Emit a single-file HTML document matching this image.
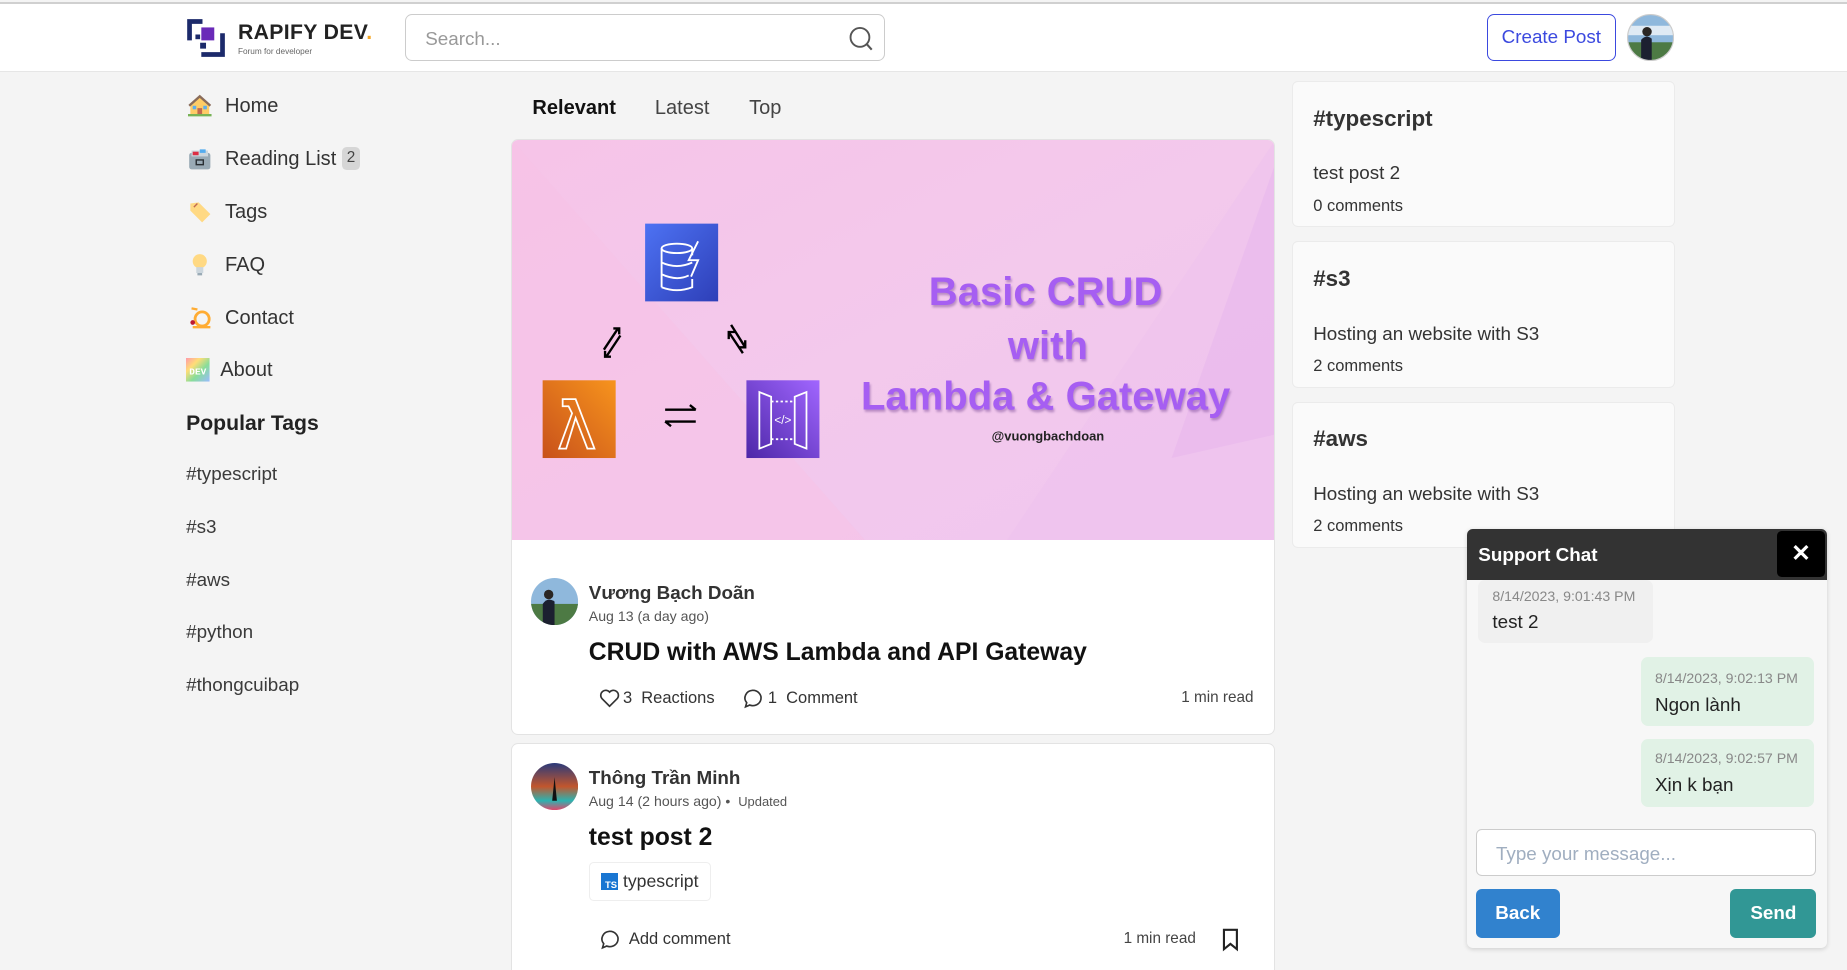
<!DOCTYPE html>
<html><head><meta charset="utf-8">
<style>
*{box-sizing:border-box;margin:0;padding:0}
html,body{width:1847px;height:970px;overflow:hidden;background:#f4f4f4}
#w{position:relative;width:1568px;height:824px;zoom:1.17793;background:#f4f4f4;font-family:"Liberation Sans","Noto Sans CJK SC",sans-serif;color:#222;overflow:hidden}
.a{position:absolute;white-space:nowrap}
.nav{font-size:17px;color:#333;line-height:20px}
.tag{font-size:16px;color:#3a3a3a;line-height:20px;left:158px}
.card{position:absolute;background:#fff;border:1px solid #e3e3e3;border-radius:6px;overflow:hidden}
.rc{position:absolute;left:1097px;width:325px;height:124px;background:#fafafa;border:1px solid #ebebeb;border-radius:5px}
.rc h3{position:absolute;left:17px;top:20px;font-size:19px;color:#333}
.rc p{position:absolute;left:17px;top:68px;font-size:16px;color:#333}
.rc span{position:absolute;left:17px;top:97px;font-size:14px;color:#333}
.msg{position:absolute;border-radius:6px;padding:0 12px}
.msg .t{font-size:12px;color:#888;position:absolute;left:12px}
.msg .b{font-size:16px;color:#222;position:absolute;left:12px}
</style></head><body><div id="w">
<!-- header -->
<div class="a" style="left:0;width:1568px;border-top:2px solid #d0d0d0;border-bottom:1px solid #e6e6e6;top:2px;height:59px;background:#fff"></div>
<svg class="a" style="left:158px;top:15px" width="34" height="34" viewBox="0 0 34 34">
<path d="M1 1H14V5H5V19H1Z" fill="#1c2a6b"/><path d="M33 13V33H13V29H29V13Z" fill="#1c2a6b"/>
<rect x="13" y="8" width="11" height="11" fill="#6a2ab8"/><rect x="8" y="14" width="4" height="4" fill="#1c2a6b"/><rect x="12" y="21" width="5" height="5" fill="#1c2a6b"/></svg>
<div class="a" style="left:202px;top:18px;font-size:18px;font-weight:bold;color:#222;letter-spacing:0.3px">RAPIFY DEV<span style="color:#f5a623">.</span></div>
<div class="a" style="left:202px;top:40px;font-size:7px;color:#666">Forum for developer</div>
<div class="a" style="left:344px;top:12px;width:407px;height:40px;border:1px solid #ccc;border-radius:6px;background:#fff"></div>
<div class="a" style="left:361px;top:24px;font-size:16px;color:#999">Search...</div>
<svg class="a" style="left:719px;top:21px" width="24" height="24" viewBox="0 0 24 24"><circle cx="11" cy="10.5" r="8" fill="none" stroke="#555" stroke-width="1.6"/><path d="M17 16.5L21 21" stroke="#555" stroke-width="1.8"/></svg>
<div class="a" style="left:1262px;top:12px;width:110px;height:40px;border:1px solid #3b49df;border-radius:6px;background:#fff;color:#3b49df;font-size:16px;text-align:center;line-height:38px">Create Post</div>
<svg class="a" style="left:1381px;top:12px" width="40" height="40" viewBox="0 0 40 40"><defs><clipPath id="c1"><circle cx="20" cy="20" r="19.5"/></clipPath></defs><g clip-path="url(#c1)"><rect width="40" height="40" fill="#8fb8dc"/><rect y="10" width="40" height="8" fill="#dfeaf4"/><rect y="24" width="40" height="16" fill="#4d7a44"/><path d="M12 40V22Q16 17 21 21V40Z" fill="#1c2030"/><circle cx="17" cy="15" r="4" fill="#2a2624"/></g><circle cx="20" cy="20" r="19.5" fill="none" stroke="#ccc"/></svg>

<!-- left nav -->
<svg class="a" style="left:160px;top:80px" width="20" height="20" viewBox="0 0 20 20"><path d="M2 9L10 2L18 9V17H2Z" fill="#ffcc66"/><path d="M1 10L10 2L19 10" fill="none" stroke="#8a6c5a" stroke-width="2"/><rect x="8" y="12" width="4" height="6" fill="#c1694f"/><rect x="4" y="10" width="3" height="3" fill="#5dadec"/><rect x="13" y="10" width="3" height="3" fill="#5dadec"/><rect x="0" y="17" width="20" height="2" fill="#77b255"/></svg>
<div class="a nav" style="left:191px;top:81px">Home</div>
<svg class="a" style="left:160px;top:125px" width="20" height="20" viewBox="0 0 20 20"><rect x="1" y="5" width="18" height="14" rx="2" fill="#99aab5"/><rect x="3" y="3" width="14" height="5" fill="#ccd6dd"/><rect x="4" y="4" width="5" height="3" fill="#dd2e44"/><rect x="10" y="2" width="5" height="3" fill="#55acee"/><rect x="7" y="11" width="6" height="4" fill="none" stroke="#292f33" stroke-width="1.2"/></svg>
<div class="a nav" style="left:191px;top:126px">Reading List</div>
<div class="a" style="left:290px;top:125px;width:16px;height:19px;background:#d6d6d6;border-radius:4px;font-size:13px;color:#444;text-align:center;line-height:19px">2</div>
<svg class="a" style="left:160px;top:170px" width="20" height="20" viewBox="0 0 20 20"><path d="M2 3L9 2L19 12L12 19L2 9Z" fill="#ffd983"/><path d="M5 6L8 3" stroke="#c1694f" stroke-width="1.2"/></svg>
<div class="a nav" style="left:191px;top:171px">Tags</div>
<svg class="a" style="left:160px;top:215px" width="20" height="20" viewBox="0 0 20 20"><circle cx="10" cy="7" r="6" fill="#ffd983"/><rect x="7" y="12" width="6" height="5" fill="#ccd6dd"/><rect x="8" y="17" width="4" height="2" fill="#99aab5"/></svg>
<div class="a nav" style="left:191px;top:216px">FAQ</div>
<svg class="a" style="left:160px;top:260px" width="20" height="20" viewBox="0 0 20 20"><circle cx="12" cy="11" r="6" fill="none" stroke="#ffac33" stroke-width="2.4"/><path d="M3 2L8 3" stroke="#ffac33" stroke-width="2"/><path d="M4 18L19 18" stroke="#ffac33" stroke-width="2"/><circle cx="4" cy="14" r="2" fill="#be1931"/></svg>
<div class="a nav" style="left:191px;top:261px">Contact</div>
<svg class="a" style="left:158px;top:304px" width="20" height="20" viewBox="0 0 20 20"><defs><linearGradient id="rb" x1="0" y1="0" x2="1" y2="1"><stop offset="0" stop-color="#f9a"/><stop offset=".3" stop-color="#fd7"/><stop offset=".6" stop-color="#8d9"/><stop offset="1" stop-color="#9bf"/></linearGradient></defs><rect width="20" height="20" fill="url(#rb)"/><text x="10" y="14" font-size="8" fill="#fff" text-anchor="middle" font-family="Liberation Mono" font-weight="bold">DEV</text></svg>
<div class="a nav" style="left:187px;top:305px">About</div>
<div class="a" style="left:158px;top:350px;font-size:18px;font-weight:bold;color:#222">Popular Tags</div>
<div class="a tag" style="top:392px">#typescript</div>
<div class="a tag" style="top:437px">#s3</div>
<div class="a tag" style="top:482px">#aws</div>
<div class="a tag" style="top:526px">#python</div>
<div class="a tag" style="top:571px">#thongcuibap</div>

<!-- tabs -->
<div class="a" style="left:452px;top:82px;font-size:17px;font-weight:bold;color:#111">Relevant</div>
<div class="a" style="left:556px;top:82px;font-size:17px;color:#444">Latest</div>
<div class="a" style="left:636px;top:82px;font-size:17px;color:#444">Top</div>

<!-- card 1 -->
<div class="card" style="left:434px;top:118px;width:648px;height:506px">
<svg style="position:absolute;left:0;top:0" width="648" height="340" viewBox="0 0 648 340">
<defs><linearGradient id="bg" x1="0" y1="0" x2="1" y2="1"><stop offset="0" stop-color="#f6c4e8"/><stop offset=".5" stop-color="#f3c9ec"/><stop offset="1" stop-color="#f0c6ef"/></linearGradient>
<linearGradient id="db" x1="0" y1="0" x2="1" y2="1"><stop offset="0" stop-color="#4d72f3"/><stop offset="1" stop-color="#2e3fb8"/></linearGradient>
<linearGradient id="lm" x1="0" y1="1" x2="1" y2="0"><stop offset="0" stop-color="#c8511b"/><stop offset="1" stop-color="#f7941d"/></linearGradient>
<linearGradient id="ag" x1="0" y1="1" x2="1" y2="0"><stop offset="0" stop-color="#4d27a8"/><stop offset="1" stop-color="#a166ff"/></linearGradient></defs>
<rect width="648" height="340" fill="url(#bg)"/>
<path d="M0 0L300 340H0Z" fill="#f8c2e6" opacity=".5"/>
<path d="M648 0V340H420Z" fill="#eec2ee" opacity=".5"/>
<path d="M648 20L560 270L648 250Z" fill="#e8b8ec" opacity=".6"/>
<rect x="113" y="71" width="62" height="66" fill="url(#db)"/>
<g fill="none" stroke="#fff" stroke-width="1.6"><ellipse cx="140" cy="92" rx="13" ry="4"/><path d="M127 92V125M153 92V98M127 104Q140 110 153 104M127 114Q140 120 150 115M127 125Q140 130 153 125V118"/><path d="M158 86L150 102H158L152 116"/></g>
<rect x="26" y="204" width="62" height="66" fill="url(#lm)"/>
<path d="M43 220H54L70 262H64L54 236L46 262H40L51 232L48 226H43Z" fill="none" stroke="#fff" stroke-width="1.5"/>
<rect x="199" y="204" width="62" height="66" fill="url(#ag)"/>
<g fill="none" stroke="#fff" stroke-width="1.5"><path d="M210 214L220 218V258L210 262ZM250 214L240 218V258L250 262Z"/><path d="M220 222H240M220 254H240" stroke-dasharray="2 2"/><text x="230" y="241" fill="#fff" stroke="none" font-size="10" text-anchor="middle" font-family="Liberation Sans">&lt;/&gt;</text></g>
<g stroke="#000" stroke-width="2" fill="none"><path d="M78 178L90 160M86 160H91V165M92 166L80 184M79 179V184H84"/><path d="M186 157L198 176M198 170V176H192M184 163L196 181M184 169V163H190"/><path d="M130 229H156M151 225L156 229M130 239H156M135 243L130 239"/></g>
<g font-family="Liberation Sans" font-weight="bold" fill="#a65ef2" text-anchor="middle" font-size="34" style="filter:drop-shadow(1px 2px 1px rgba(80,30,120,.35))"><text x="453" y="140">Basic CRUD</text><text x="455" y="186">with</text><text x="453" y="229">Lambda &amp; Gateway</text></g>
<text x="455" y="255" font-family="Liberation Sans" font-weight="bold" font-size="11" fill="#222" text-anchor="middle">@vuongbachdoan</text>
</svg>
<svg style="position:absolute;left:16px;top:372px" width="40" height="40" viewBox="0 0 40 40"><defs><clipPath id="c2"><circle cx="20" cy="20" r="20"/></clipPath></defs><g clip-path="url(#c2)"><rect width="40" height="40" fill="#8fb8dc"/><rect y="22" width="40" height="18" fill="#4d7a44"/><path d="M10 40V22Q14 16 20 20V40Z" fill="#1c2030"/><circle cx="15" cy="14" r="4" fill="#2a2624"/></g></svg>
<div class="a" style="left:65px;top:375px;font-size:16px;font-weight:bold;color:#333">Vương Bạch Doãn</div>
<div class="a" style="left:65px;top:397px;font-size:12px;color:#555">Aug 13 (a day ago)</div>
<div class="a" style="left:65px;top:424px;font-size:21px;font-weight:bold;color:#111">CRUD with AWS Lambda and API Gateway</div>
<svg class="a" style="left:74px;top:465px" width="18" height="17" viewBox="0 0 18 17"><path d="M9 15.5L2.5 9A3.8 3.8 0 0 1 9 3.5A3.8 3.8 0 0 1 15.5 9Z" fill="none" stroke="#333" stroke-width="1.4"/></svg>
<div class="a" style="left:94px;top:466px;font-size:14px;color:#333">3 &nbsp;Reactions</div>
<svg class="a" style="left:195px;top:465px" width="18" height="18" viewBox="0 0 18 18"><path d="M9 2A7 6.5 0 1 1 6.5 14.5L3 16L4 12.5A7 6.5 0 0 1 9 2Z" fill="none" stroke="#333" stroke-width="1.4"/></svg>
<div class="a" style="left:217px;top:466px;font-size:14px;color:#333">1 &nbsp;Comment</div>
<div class="a" style="left:568px;top:466px;font-size:13px;color:#444">1 min read</div>
</div>

<!-- card 2 -->
<div class="card" style="left:434px;top:631px;width:648px;height:200px">
<svg style="position:absolute;left:16px;top:16px" width="40" height="40" viewBox="0 0 40 40"><defs><clipPath id="c3"><circle cx="20" cy="20" r="20"/></clipPath><linearGradient id="tm" x1="0" y1="0" x2="0" y2="1"><stop offset="0" stop-color="#2a3a7a"/><stop offset=".5" stop-color="#c2562d"/><stop offset=".8" stop-color="#2cb3b0"/><stop offset="1" stop-color="#e2466b"/></linearGradient></defs><g clip-path="url(#c3)"><rect width="40" height="40" fill="url(#tm)"/><path d="M20 12L18 32H22Z" fill="#111"/></g></svg>
<div class="a" style="left:65px;top:19px;font-size:16px;font-weight:bold;color:#333">Thông Trần Minh</div>
<div class="a" style="left:65px;top:41px;font-size:12px;color:#555">Aug 14 (2 hours ago) • &nbsp;<span style="font-size:11px">Updated</span></div>
<div class="a" style="left:65px;top:68px;font-size:21px;font-weight:bold;color:#111">test post 2</div>
<div class="a" style="left:65px;top:100px;width:104px;height:33px;border:1px solid #eee;border-radius:4px"></div>
<div class="a" style="left:75px;top:109px;width:15px;height:15px;background:#1976d2;color:#fff;font-size:8px;font-weight:bold;line-height:20px;text-align:right;padding-right:1px">TS</div>
<div class="a" style="left:94px;top:108px;font-size:15px;color:#333">typescript</div>
<svg class="a" style="left:74px;top:157px" width="18" height="18" viewBox="0 0 18 18"><path d="M9 2A7 6.5 0 1 1 6.5 14.5L3 16L4 12.5A7 6.5 0 0 1 9 2Z" fill="none" stroke="#333" stroke-width="1.4"/></svg>
<div class="a" style="left:99px;top:158px;font-size:14px;color:#333">Add comment</div>
<div class="a" style="left:519px;top:158px;font-size:13px;color:#444">1 min read</div>
<svg class="a" style="left:602px;top:156px" width="16" height="20" viewBox="0 0 16 20"><path d="M2.5 1.5H13.5V18L8 13.5L2.5 18Z" fill="none" stroke="#222" stroke-width="1.8"/></svg>
</div>

<!-- right cards -->
<div class="rc" style="top:69px"><h3>#typescript</h3><p>test post 2</p><span>0 comments</span></div>
<div class="rc" style="top:205px"><h3>#s3</h3><p>Hosting an website with S3</p><span>2 comments</span></div>
<div class="rc" style="top:341px"><h3>#aws</h3><p>Hosting an website with S3</p><span>2 comments</span></div>

<!-- chat -->
<div class="a" style="left:1245px;top:449px;width:306px;height:356px;background:#f7f7f7;border-radius:5px;box-shadow:0 1px 4px rgba(0,0,0,.15);overflow:hidden">
<div style="position:absolute;left:0;top:0;width:306px;height:43px;background:#333"></div>
<div class="a" style="left:10px;top:13px;font-size:16px;font-weight:bold;color:#fff">Support Chat</div>
<div class="a" style="left:264px;top:2px;width:40px;height:39px;background:#000;border-radius:4px;color:#fff;font-size:20px;font-weight:bold;text-align:center;line-height:39px">✕</div>
<div class="msg" style="left:10px;top:43px;width:148px;height:54px;background:#f0f0f0"><div class="t" style="top:7px">8/14/2023, 9:01:43 PM</div><div class="b" style="top:27px">test 2</div></div>
<div class="msg" style="left:148px;top:109px;width:147px;height:58px;background:#e1f2e6"><div class="t" style="top:11px">8/14/2023, 9:02:13 PM</div><div class="b" style="top:31px">Ngon lành</div></div>
<div class="msg" style="left:148px;top:178px;width:147px;height:58px;background:#e1f2e6"><div class="t" style="top:10px">8/14/2023, 9:02:57 PM</div><div class="b" style="top:30px">Xịn k bạn</div></div>
<div class="a" style="left:8px;top:255px;width:289px;height:40px;background:#fff;border:1px solid #ccc;border-radius:5px"></div>
<div class="a" style="left:25px;top:267px;font-size:16px;color:#a0aec0">Type your message...</div>
<div class="a" style="left:8px;top:306px;width:71px;height:41px;background:#3182ce;border-radius:5px;color:#fff;font-size:16px;font-weight:bold;text-align:center;line-height:41px">Back</div>
<div class="a" style="left:224px;top:306px;width:73px;height:41px;background:#319795;border-radius:5px;color:#fff;font-size:16px;font-weight:bold;text-align:center;line-height:41px">Send</div>
</div>
</div></body></html>
